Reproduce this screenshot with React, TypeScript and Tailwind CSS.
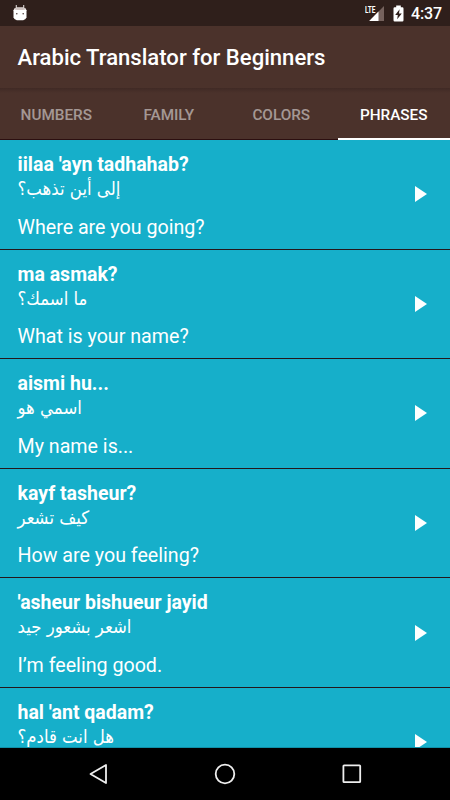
const rows = [
  ["iilaa 'ayn tadhahab?", "إلى أين تذهب؟", "Where are you going?"],
  ["ma asmak?", "ما اسمك؟", "What is your name?"],
  ["aismi hu...", "اسمي هو", "My name is..."],
  ["kayf tasheur?", "كيف تشعر", "How are you feeling?"],
  ["'asheur bishueur jayid", "اشعر بشعور جيد", "I’m feeling good."],
  ["hal 'ant qadam?", "هل انت قادم؟", ""],
];
const tabs = ["NUMBERS", "FAMILY", "COLORS", "PHRASES"];

function StatusBar() {
  return (
    <div className="flex h-[26px] items-center bg-[#2f1f1b] pr-[8px] pl-[13px]">
      <svg width="14" height="17" viewBox="0 0 14 17" className="mt-[-2px]">
        <path d="M3.3 1v4M10.7 1v4" stroke="#d8d2d0" strokeWidth="1.1" />
        <path d="M0.5 6.2Q1 3.6 4 3.4h6q3 .2 3.5 2.8v7q-.6 2.6-3.3 3H3.8q-2.7-.4-3.3-3Z" fill="#fff" />
        <path d="M1.2 5.4Q2 3.6 4 3.4h6q2 .2 2.8 2Q7 6.8 1.2 5.4Z" fill="#cfc4c1" />
        <circle cx="3.8" cy="9.8" r=".8" fill="#4b3b37" />
        <circle cx="10.2" cy="9.8" r=".8" fill="#4b3b37" />
      </svg>
      <svg width="20" height="18" viewBox="0 0 20 18" className="mt-[-1px] ml-auto">
        <path d="M4.2 17 19 2v15Z" fill="#75625d" />
        <path d="M4.2 17 13.5 7.6V17Z" fill="#fff" />
        <rect x="0" y="0" width="11" height="9.5" fill="#2f1f1b" />
        <text x="0" y="8.5" fill="#fff" fontSize="9" fontWeight="700" textLength="10.5" lengthAdjust="spacingAndGlyphs">LTE</text>
      </svg>
      <svg width="11" height="17" viewBox="0 0 11 17" className="ml-[8px]">
        <path d="M3.2.5h4.6v1.8H9.3q1.2 0 1.2 1.2v11.8q0 1.2-1.2 1.2H1.7q-1.2 0-1.2-1.2V3.5q0-1.2 1.2-1.2h1.5Z" fill="#fff" />
        <path d="M6.6 4.2 2.2 10h2.6l-.6 4.2L8.8 8.5H6Z" fill="#2f1f1b" />
      </svg>
      <span className="ml-[7px] pt-px text-base leading-[26px] font-medium tracking-[-0.15px]">4:37</span>
    </div>
  );
}

export default function App() {
  return (
    <div className="flex h-[800px] w-[450px] flex-col overflow-hidden bg-[#16afca] font-['Roboto','DejaVu_Sans',sans-serif] text-white">
      <header className="h-[140px] shrink-0 bg-[#4b322b]">
        <StatusBar />
        <h1 className="flex h-[62px] items-center pt-[2px] pl-[17.5px] text-[22.1px] font-medium">Arabic Translator for Beginners</h1>
        <nav className="grid h-[52px] grid-cols-4 bg-linear-to-b from-[#402a25] to-[#4b322b] to-[5px]">
          {tabs.map((t) => (
            <span
              key={t}
              className={
                t === "PHRASES"
                  ? "flex items-center justify-center border-b-2 border-white pt-[4px] text-[15.3px] font-medium"
                  : "flex items-center justify-center border-b border-[#2c0f10] pt-[3px] text-[15.3px] font-medium text-white/50"
              }
            >
              {t}
            </span>
          ))}
        </nav>
      </header>
      <main className="h-[608px] shrink-0 overflow-hidden border-b border-[#0f90a8]">
        {rows.map(([latin, arabic, english]) => (
          <section key={latin} className="flex h-[109.6px] items-center justify-between border-b border-[#25171b] pr-[23px] pl-[17.5px]">
            <div className="flex h-full flex-col pt-[13px]">
              <b className="text-[19.5px] leading-6">{latin}</b>
              <span className="font-['DejaVu_Sans_Condensed','DejaVu_Sans',sans-serif] text-[18.4px] leading-6 font-stretch-condensed" lang="ar">{arabic}</span>
              {english && <span className="mt-[14.5px] text-[19.65px] leading-6">{english}</span>}
            </div>
            <svg width="12" height="16" viewBox="0 0 12 16"><path d="M0 0 12 8 0 16Z" fill="#fff" /></svg>
          </section>
        ))}
      </main>
      <footer className="flex h-[52px] shrink-0 items-center justify-between bg-black pr-[88px] pl-[89px]">
        <svg width="19" height="22" viewBox="0 0 19 22"><path d="M17 2v18L1.5 11Z" fill="none" stroke="#eee" strokeWidth="1.8" strokeLinejoin="round" /></svg>
        <svg width="22" height="22" viewBox="0 0 22 22"><circle cx="11" cy="11" r="9.3" fill="none" stroke="#eee" strokeWidth="1.8" /></svg>
        <svg width="20" height="20" viewBox="0 0 20 20"><rect x="1.4" y="1.4" width="16.8" height="16.8" rx=".7" fill="none" stroke="#eee" strokeWidth="1.8" /></svg>
      </footer>
    </div>
  );
}
